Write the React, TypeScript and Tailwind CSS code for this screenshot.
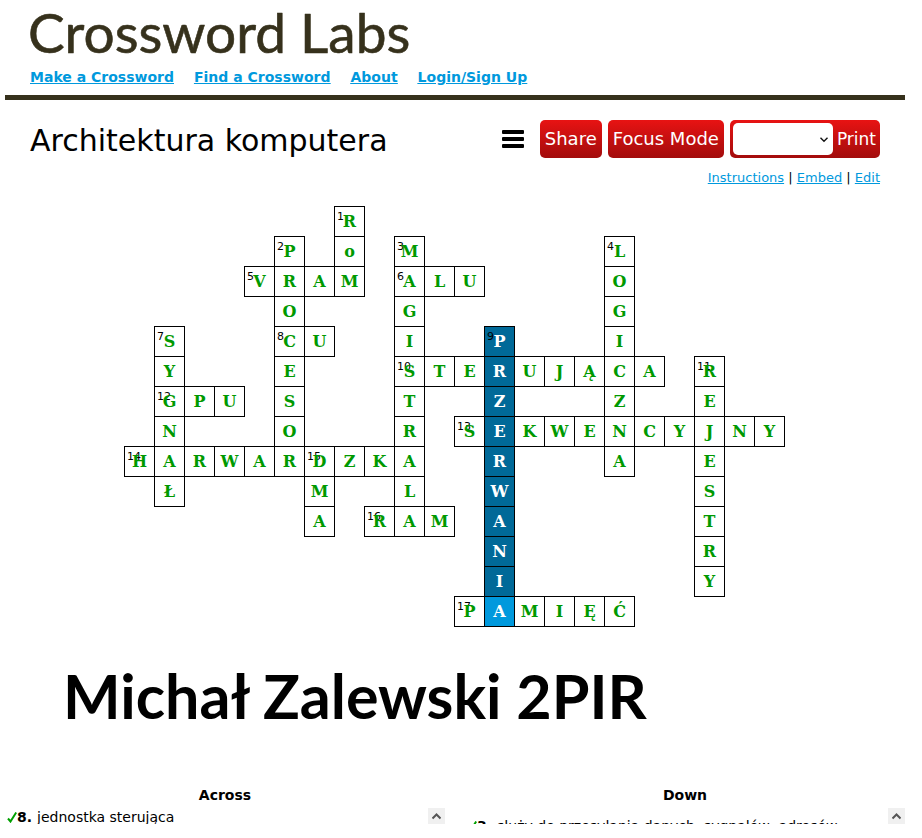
import React from "react";

type Word = { n: number; col: number; row: number; text: string; down?: boolean };

const words: Word[] = [
  { n: 1, col: 8, row: 1, text: "RoM", down: true },
  { n: 2, col: 6, row: 2, text: "PROCESOR", down: true },
  { n: 3, col: 10, row: 2, text: "MAGISTRALA", down: true },
  { n: 4, col: 17, row: 2, text: "LOGICZNA", down: true },
  { n: 5, col: 5, row: 3, text: "VRAM" },
  { n: 6, col: 10, row: 3, text: "ALU" },
  { n: 7, col: 2, row: 5, text: "SYGNAŁ", down: true },
  { n: 8, col: 6, row: 5, text: "CU" },
  { n: 9, col: 13, row: 5, text: "PRZERWANIA", down: true },
  { n: 10, col: 10, row: 6, text: "STERUJĄCA" },
  { n: 11, col: 20, row: 6, text: "REJESTRY", down: true },
  { n: 12, col: 2, row: 7, text: "GPU" },
  { n: 13, col: 12, row: 8, text: "SEKWENCYJNY" },
  { n: 14, col: 1, row: 9, text: "HARWARDZKA" },
  { n: 15, col: 7, row: 9, text: "DMA", down: true },
  { n: 16, col: 9, row: 11, text: "RAM" },
  { n: 17, col: 12, row: 14, text: "PAMIĘĆ" },
];

type Cell = { col: number; row: number; ch: string; n?: number; state: "plain" | "word" | "current" };

const cells: Cell[] = (() => {
  const map = new Map<string, Cell>();
  for (const w of words) {
    [...w.text].forEach((ch, i) => {
      const col = w.col + (w.down ? 0 : i);
      const row = w.row + (w.down ? i : 0);
      const key = `${col}-${row}`;
      const cell: Cell = map.get(key) ?? { col, row, ch, state: "plain" };
      if (i === 0) cell.n = w.n;
      if (w.n === 9) cell.state = i === 9 ? "current" : "word";
      map.set(key, cell);
    });
  }
  return [...map.values()].sort((a, b) => a.row - b.row || a.col - b.col);
})();

const cellStyle = {
  plain: "bg-white text-[#009900]",
  word: "bg-[#006998] text-white",
  current: "bg-[#0099dd] text-white",
};

const redButton =
  "h-[38px] rounded-[5px] bg-linear-to-b from-[#e81313] to-[#a30c0c] px-[5px] text-[18px] leading-[38px] text-white";

function Clues({ title, number, clue, scrolled }: { title: string; number: number; clue: string; scrolled?: boolean }) {
  return (
    <section className="flex-1">
      <h3 className="text-center text-[14px] leading-[26px] font-bold">{title}</h3>
      <div className="flex h-4 justify-between overflow-hidden">
        <p className={`flex h-[18px] items-center pl-[2px] text-[14px] leading-[18px] whitespace-nowrap ${scrolled ? "mt-[9px]" : ""}`}>
          <svg viewBox="0 0 10 11" className="h-[11px] w-[10px] shrink-0" aria-hidden="true">
            <path d="M1 6.5 L3.5 9.5 L9.2 0.5" fill="none" stroke="#00a000" strokeWidth="2" />
          </svg>
          <b>{number}.</b>
          <span className="ml-[5px]">{clue}</span>
        </p>
        <button aria-label={`Scroll ${title} up`} className="flex h-[17px] w-[17px] items-center justify-center bg-[#f0f0f0]">
          <svg viewBox="0 0 9 7" className="h-[7px] w-[9px]" aria-hidden="true">
            <path d="M0.5 5.5 L4.5 1.5 L8.5 5.5" fill="none" stroke="#555" strokeWidth="2" />
          </svg>
        </button>
      </div>
    </section>
  );
}

export default function App() {
  return (
    <div className="mr-[17px] ml-[5px] bg-white font-['DejaVu_Sans',sans-serif] text-black">
      <header className="border-b-[5px] border-[#36311c] px-[25px] pt-1">
        <h1>
          <svg viewBox="0 0 380 60" className="h-[60px] w-[380px] overflow-visible" role="img" aria-label="Crossword Labs">
            <text
              x="-2"
              y="49"
              className="font-['Lato',sans-serif] text-[55px]"
              fill="#36311c"
              stroke="#36311c"
              strokeWidth="0.6"
              strokeLinejoin="round"
            >
              Crossword Labs
            </text>
          </svg>
        </h1>
        <nav className="flex h-[31px] gap-5 text-[14px] leading-[26px] font-bold text-[#0099dd] underline">
          <a href="#make">Make a Crossword</a>
          <a href="#find">Find a Crossword</a>
          <a href="#about">About</a>
          <a href="#login">Login/Sign Up</a>
        </nav>
      </header>

      <main>
        <div className="flex items-center justify-between px-[25px] pt-5">
          <h2 className="pt-[3px] text-[30px] leading-[35px]">Architektura komputera</h2>
          <div className="flex items-center gap-[6px]">
            <button aria-label="Menu" className="mr-[10px] flex w-[22px] flex-col gap-[3px]">
              <span className="h-1 w-full rounded-[1px] bg-black" />
              <span className="h-1 w-full rounded-[1px] bg-black" />
              <span className="h-1 w-full rounded-[1px] bg-black" />
            </button>
            <button className={redButton}>Share</button>
            <button className={redButton}>Focus Mode</button>
            <div className="flex items-center rounded-[5px] bg-linear-to-b from-[#e81313] to-[#a30c0c] pl-[3px]">
              <div className="relative">
                <select aria-label="Print option" className="block h-8 w-[100px] appearance-none rounded-[5px] bg-white">
                  <option></option>
                </select>
                <svg viewBox="0 0 8 6" className="pointer-events-none absolute top-[14px] right-[5px] h-[6px] w-2" aria-hidden="true">
                  <path d="M0.5 0.8 L4 4.3 L7.5 0.8" fill="none" stroke="#111" strokeWidth="1.4" />
                </svg>
              </div>
              <button className="h-[38px] px-1 text-[17px] leading-[38px] text-white">Print</button>
            </div>
          </div>
        </div>
        <p className="px-[25px] pt-[10px] text-right text-[13px] leading-[20px]">
          <a href="#instructions" className="text-[#0099dd] underline">Instructions</a> |{" "}
          <a href="#embed" className="text-[#0099dd] underline">Embed</a> |{" "}
          <a href="#edit" className="text-[#0099dd] underline">Edit</a>
        </p>

        <div className="mt-[18px] grid grid-cols-[repeat(22,30px)] grid-rows-[repeat(14,30px)] justify-center pr-[2px]">
          {cells.map((c) => (
            <div
              key={`${c.col}-${c.row}`}
              style={{ gridColumn: c.col, gridRow: c.row }}
              className={`relative h-[31px] w-[31px] border border-black text-center font-['DejaVu_Serif',serif] text-[16px] leading-[30px] font-bold ${cellStyle[c.state]}`}
            >
              {c.n && (
                <span className="absolute top-1 left-[2px] font-['DejaVu_Sans',sans-serif] text-[11px] leading-[12px] font-normal text-black">
                  {c.n}
                </span>
              )}
              <span className="relative">{c.ch}</span>
            </div>
          ))}
        </div>

        <h2 className="mt-[34px] pl-[58px] font-['Lato',sans-serif] text-[61px] leading-[72px] font-bold">
          Michał Zalewski 2PIR
        </h2>

        <div className="mt-[50px] flex gap-5">
          <Clues title="Across" number={8} clue="jednostka sterująca" />
          <Clues title="Down" number={3} clue="służy do przesyłania danych, sygnałów, adresów" scrolled />
        </div>
      </main>
    </div>
  );
}
